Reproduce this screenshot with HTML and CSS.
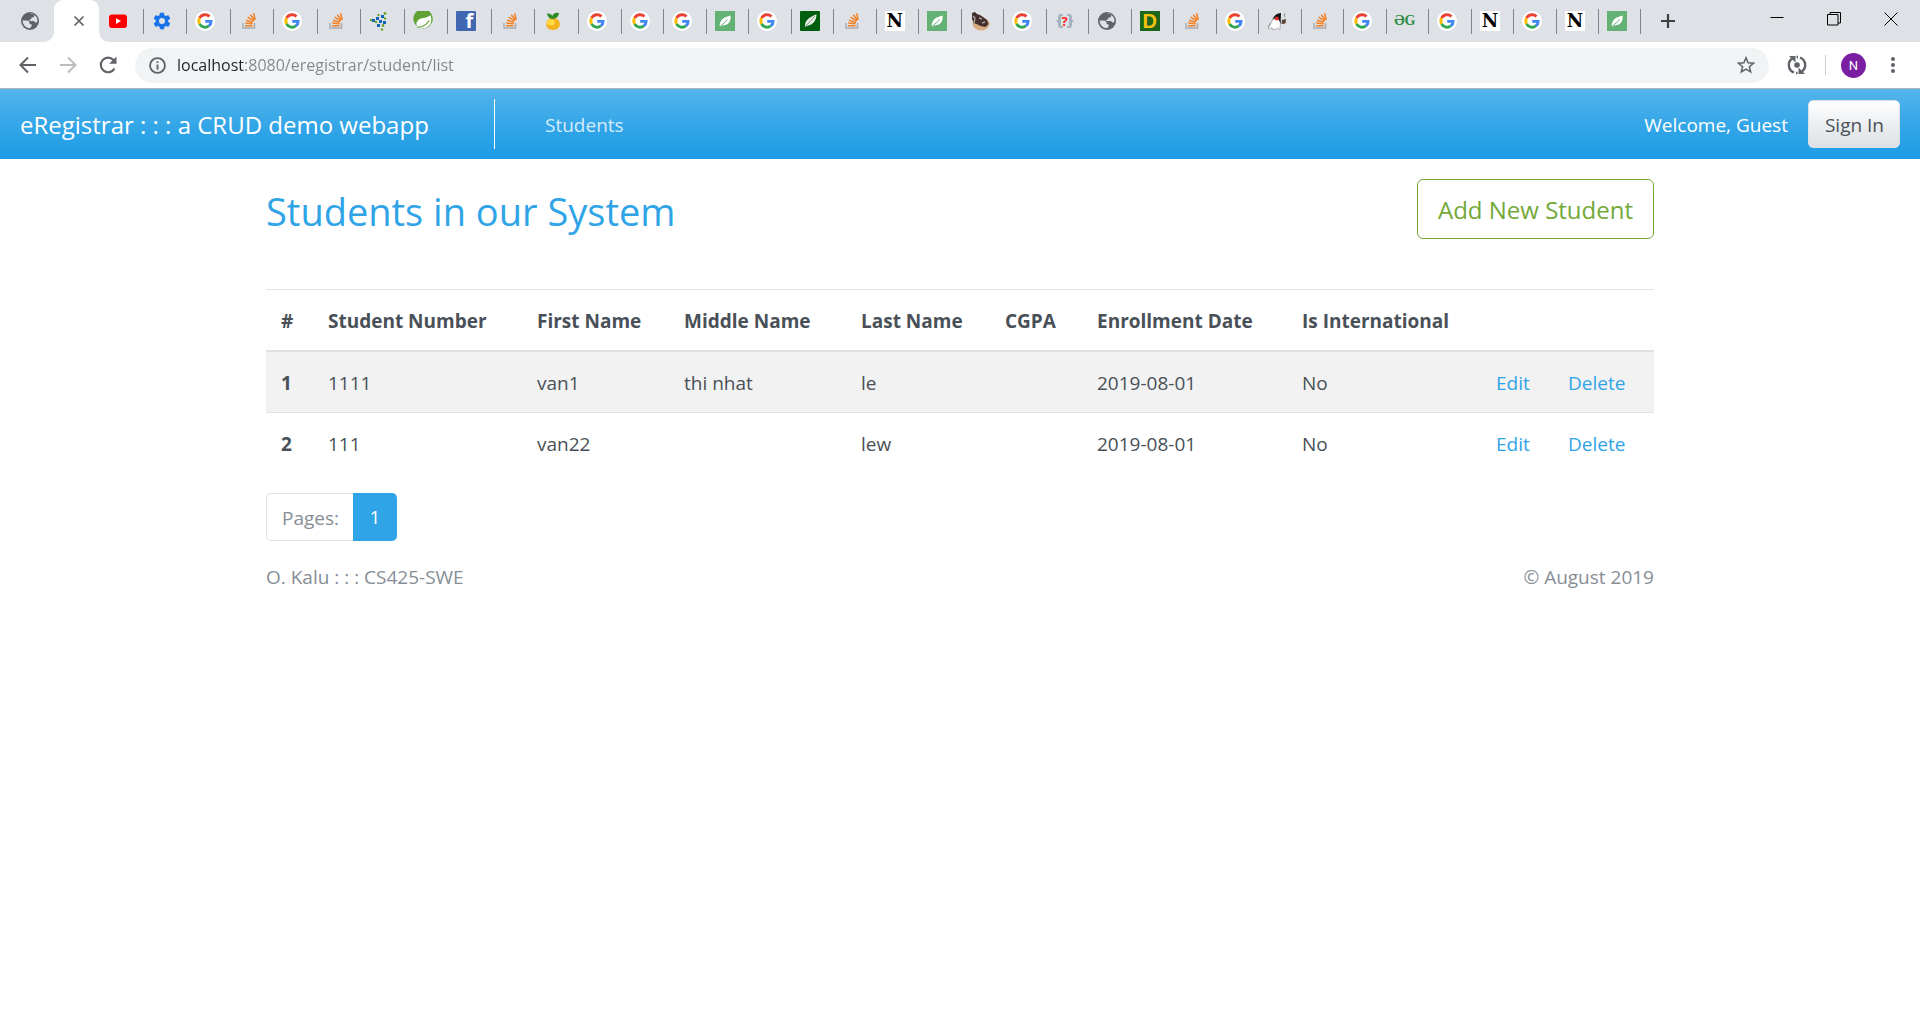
FILE: index.html
```html
<!DOCTYPE html>
<html lang="en">
<head>
<meta charset="utf-8">
<meta name="viewport" content="width=device-width, initial-scale=1">
<title>eRegistrar</title>
<link rel="stylesheet" href="styles.css">
</head>
<body>
<svg class="sprite" aria-hidden="true">
  <symbol id="globe" viewBox="0 0 20 20"><circle cx="10" cy="10" r="9" fill="#5f6368"/><path d="M2.6 9.5h4.2c1.800 0 2.800 1 2.800 2.600v1.200h2v1.400c-.2 1.400-1 2-2 2.600A7.400 7.400 0 0 1 2.600 9.500zM9.200 3c2-.5 3.700 0 5.200 1l-.6 2.200-2.300.3-.3 1.800-2 .4.400 1.300h4.200l1.600 1.500 1.700-.3c.5-1.700.3-3.400-.3-4.700l-2.400-2.500C12.800 2.400 10.800 2.200 9.200 3z" fill="#dee1e6"/></symbol>
  <symbol id="youtube" viewBox="0 0 20 20"><rect x="1" y="3.500" width="18" height="13.500" rx="3" fill="#f00"/><path d="M8 7.300v5.600l5-2.800z" fill="#fff"/></symbol>
  <symbol id="gear" viewBox="0 0 24 24"><path fill="#1a73e8" d="M19.400 13a7.500 7.500 0 0 0 0-2l2.200-1.700a.5.500 0 0 0 .1-.6l-2-3.500a.5.500 0 0 0-.6-.2l-2.600 1a7.700 7.700 0 0 0-1.700-1l-.4-2.600a.5.500 0 0 0-.5-.4h-4a.5.500 0 0 0-.5.400L9 5a7.700 7.700 0 0 0-1.700 1l-2.500-1a.5.500 0 0 0-.6.200l-2 3.500a.5.500 0 0 0 .1.600L4.500 11a7.500 7.500 0 0 0 0 2l-2.200 1.700a.5.500 0 0 0-.1.600l2 3.500c.1.200.4.300.6.200l2.600-1c.5.400 1.100.7 1.700 1l.4 2.600c0 .2.200.4.500.4h4c.3 0 .5-.2.500-.4l.4-2.600c.6-.3 1.200-.6 1.700-1l2.500 1c.2.100.5 0 .6-.2l2-3.500a.5.500 0 0 0-.1-.6zM12 15.600a3.600 3.600 0 1 1 0-7.200 3.600 3.600 0 0 1 0 7.200z"/></symbol>
  <symbol id="google" viewBox="0 0 20 20"><circle cx="10" cy="10" r="10" fill="#fff"/><g fill="none" stroke-width="2.900"><path d="M14.500 5.600A6.200 6.200 0 0 0 4.600 7" stroke="#ea4335"/><path d="M4.600 7a6.300 6.300 0 0 0 0 6" stroke="#fbbc05"/><path d="M4.600 13a6.200 6.200 0 0 0 9.300 1.800" stroke="#34a853"/><path d="M13.900 14.800c1.500-1.200 2.200-2.500 2.200-4.400H10.200" stroke="#4285f4"/></g></symbol>
  <symbol id="stack" viewBox="0 0 20 20"><path d="M4 12v5h11.500v-5" fill="none" stroke="#a9adb1" stroke-width="1.500"/><g stroke="#f48024" stroke-width="1.500"><path d="M6 14.700h7.500M6.200 12l7.400.8M7 9.200l7 2.200M8.700 6.200l6 4M11.300 3.700l4.200 5.600M14.600 2.200l1.600 6.500"/></g></symbol>
  <symbol id="dots" viewBox="0 0 20 20"><g fill="#1565b5"><path d="M7 6h3v3H7zM12 4h3v3h-3zM10 9h3v3h-3zM14 10h3v3h-3zM8 13h3v3H8zM3 8h3v3H3z"/></g><g fill="#6aa52c"><circle cx="16" cy="2.500" r="1.400"/><circle cx="9.500" cy="4" r="1.200"/><circle cx="7" cy="11" r="1.300"/><circle cx="2" cy="9" r="1.200"/><circle cx="14" cy="14.500" r="1.400"/><circle cx="16" cy="7.500" r="1.200"/><circle cx="13" cy="18.500" r="1.200"/></g></symbol>
  <symbol id="spring" viewBox="0 0 20 20"><path d="M17.500 1.500A9.700 9.700 0 1 0 19.800 8c-.2-2.500-1-4.700-2.300-6.500z" fill="#5fa134"/><path d="M17.500 4C14.500 7.500 9.500 6 6 8.500c-3.600 2.800-3 6.200-.5 8 3.500 1.500 8.500.8 11-2.200 2.500-3 2-7 1-10.300z" fill="#fff"/><path d="M4.500 16.300c5-.3 9-2.500 11.700-6.800" fill="none" stroke="#5fa134" stroke-width="1.200"/></symbol>
  <symbol id="fruit" viewBox="0 0 20 20"><path d="M10 7c4 0 6.800 2.300 6.800 6.300S13.500 19 10 19s-6.800-1.700-6.800-5.700S6 7 10 7z" fill="#f6b21b"/><ellipse cx="8" cy="11.500" rx="4" ry="3" fill="#ffdc46"/><path d="M10 8C6 8 4.500 5 4 2.500 7 2 8.500 3.500 9.500 5 10 2.500 12.500 1.300 16 2c-.3 3-2.300 5.700-6 6z" fill="#2c8b25"/></symbol>
  <symbol id="leaf" viewBox="0 0 20 20"><path d="M0 0h20v20H0z" fill="#63b175"/><path d="M15.500 4.500c.7 5.500-1.800 10-7.600 9.700L5.500 15.800l-.9-1C5 8.300 9 6.200 15.500 4.500z" fill="#fff"/><path d="M5 15.500c3-2.500 5.500-4.500 7.500-7" fill="none" stroke="#63b175"/></symbol>
  <symbol id="feather" viewBox="0 0 20 20"><rect width="20" height="20" rx="1" fill="#005f0f"/><path d="M16.500 3.500c0 5-2.700 9.500-7.500 10.800L4.800 16l.7-4.500C7.500 7.500 12 5 16.500 3.500z" fill="#e8f0e8"/><path d="M5 16L15 5" stroke="#7a977d"/></symbol>
  <symbol id="coffee" viewBox="0 0 20 20"><ellipse cx="11" cy="13" rx="8.500" ry="6.500" fill="#d9ab83"/><path d="M2 2l3-1 2 2 3 1 3 2 4 3 1.500 4-3 3-5-1-4-2-3-1L2 8z" fill="#43302c"/><path d="M3 5l2 2-1 5M9 7l3 1M12 12l3-1" fill="none" stroke="#a8a0a0" stroke-width="1.400"/></symbol>
  <symbol id="brackets" viewBox="0 0 20 20"><path d="M8 3H5.500Q3 3 3 6v2.500L1 10l2 1.500V14q0 3 2.500 3H8v-2H6V5h2zM12 3h2.500Q17 3 17 6v2.500l2 1.500-2 1.500V14q0 3-2.500 3H12v-2h2V5h-2z" fill="#a5b3c1"/></symbol>
  <symbol id="duke" viewBox="0 0 20 20"><path d="M6 8L1 17.500l2 .3 2-1.500.5 2.500 3-.5 2-1.500 2.500 2 .5-10z" fill="#fff" stroke="#888" stroke-width=".6"/><path d="M5.500 8.500C7 4.500 10 2.200 14 2l-.5 11-1.500-4-3-2.500z" fill="#111"/><circle cx="9.800" cy="7.500" r="2" fill="#dc2b2b"/><path d="M15 9l4-1-.5 4.500-4 .5z" fill="#5c4033"/><path d="M18 2q-1.500 2 0 4M3.500 12l-2 4" fill="none" stroke="#777" stroke-width=".8"/></symbol>
</svg>

<header class="browser">
  <div class="strip">
    <button class="tab tab-first" aria-label="Tab"><svg><use href="#globe"/></svg></button>
    <div class="tab-active">
      <button class="tab-close" aria-label="Close tab"><svg viewBox="0 0 12 12"><path d="M1.500 1.500l9 9M10.500 1.500l-9 9" stroke="#5f6368" stroke-width="1.700"/></svg></button>
    </div>
    <div class="tabs tabs-near">
      <button class="tab" aria-label="Tab"><svg><use href="#youtube"/></svg></button>
      <button class="tab" aria-label="Tab"><svg><use href="#gear"/></svg></button>
      <button class="tab" aria-label="Tab"><svg><use href="#google"/></svg></button>
      <button class="tab" aria-label="Tab"><svg><use href="#stack"/></svg></button>
      <button class="tab" aria-label="Tab"><svg><use href="#google"/></svg></button>
      <button class="tab" aria-label="Tab"><svg><use href="#stack"/></svg></button>
      <button class="tab" aria-label="Tab"><svg><use href="#dots"/></svg></button>
      <button class="tab" aria-label="Tab"><svg><use href="#spring"/></svg></button>
      <button class="tab" aria-label="Tab"><span class="fav fav-f">f</span></button>
      <button class="tab" aria-label="Tab"><svg><use href="#stack"/></svg></button>
      <button class="tab" aria-label="Tab"><svg><use href="#fruit"/></svg></button>
    </div>
    <div class="tabs tabs-far">
      <button class="tab" aria-label="Tab"><svg><use href="#google"/></svg></button>
      <button class="tab" aria-label="Tab"><svg><use href="#google"/></svg></button>
      <button class="tab" aria-label="Tab"><svg><use href="#google"/></svg></button>
      <button class="tab" aria-label="Tab"><svg><use href="#leaf"/></svg></button>
      <button class="tab" aria-label="Tab"><svg><use href="#google"/></svg></button>
      <button class="tab" aria-label="Tab"><svg><use href="#feather"/></svg></button>
      <button class="tab" aria-label="Tab"><svg><use href="#stack"/></svg></button>
      <button class="tab" aria-label="Tab"><span class="fav fav-n">N</span></button>
      <button class="tab" aria-label="Tab"><svg><use href="#leaf"/></svg></button>
      <button class="tab" aria-label="Tab"><svg><use href="#coffee"/></svg></button>
      <button class="tab" aria-label="Tab"><svg><use href="#google"/></svg></button>
      <button class="tab tab-query" aria-label="Tab"><svg><use href="#brackets"/></svg><span class="query">?</span></button>
      <button class="tab" aria-label="Tab"><svg><use href="#globe"/></svg></button>
      <button class="tab" aria-label="Tab"><span class="fav fav-d">D</span></button>
      <button class="tab" aria-label="Tab"><svg><use href="#stack"/></svg></button>
      <button class="tab" aria-label="Tab"><svg><use href="#google"/></svg></button>
      <button class="tab" aria-label="Tab"><svg><use href="#duke"/></svg></button>
      <button class="tab" aria-label="Tab"><svg><use href="#stack"/></svg></button>
      <button class="tab" aria-label="Tab"><svg><use href="#google"/></svg></button>
      <button class="tab" aria-label="Tab"><span class="fav fav-gg">ƏG</span></button>
      <button class="tab" aria-label="Tab"><svg><use href="#google"/></svg></button>
      <button class="tab" aria-label="Tab"><span class="fav fav-n">N</span></button>
      <button class="tab" aria-label="Tab"><svg><use href="#google"/></svg></button>
      <button class="tab" aria-label="Tab"><span class="fav fav-n">N</span></button>
      <button class="tab" aria-label="Tab"><svg><use href="#leaf"/></svg></button>
    </div>
    <button class="new-tab" aria-label="New tab"><svg viewBox="0 0 16 16"><path d="M8 1v14M1 8h14" stroke="#3c4043" stroke-width="2.200"/></svg></button>
    <div class="window-controls">
      <button aria-label="Minimize"><svg viewBox="0 0 14 14"><path d="M.5 5.500h13" stroke="#000"/></svg></button>
      <button aria-label="Restore"><svg viewBox="0 0 14 14"><path d="M.5 2.500h10.500v10.500H.5zM3 2.500V.5h10.500v10.500H11" fill="none" stroke="#000"/></svg></button>
      <button aria-label="Close"><svg viewBox="0 0 14 14"><path d="M.5.5l13 13M13.500.5l-13 13" stroke="#000"/></svg></button>
    </div>
  </div>
  <div class="toolbar">
    <button class="tool" aria-label="Back"><svg viewBox="0 0 20 20"><path d="M18 10H3M10 2.500L2.500 10l7.500 7.500" fill="none" stroke="#5f6368" stroke-width="2"/></svg></button>
    <button class="tool" aria-label="Forward"><svg viewBox="0 0 20 20"><path d="M2 10h15M10 2.500l7.500 7.500-7.500 7.500" fill="none" stroke="#babcbe" stroke-width="2"/></svg></button>
    <button class="tool" aria-label="Reload"><svg viewBox="0 0 20 20"><path d="M16.500 13.500A7.300 7.300 0 1 1 15.500 5l1.500 2" fill="none" stroke="#5f6368" stroke-width="2.200"/><path d="M18.500 1.500v7.300h-7.300z" fill="#5f6368"/></svg></button>
    <div class="address">
      <svg class="info" viewBox="0 0 16 16"><circle cx="8" cy="8" r="7" fill="none" stroke="#5f6368" stroke-width="1.700"/><path d="M8 7v5M8 4v1.700" stroke="#5f6368" stroke-width="1.700"/></svg>
      <input class="url" type="text" aria-label="Address" value="localhost:8080/eregistrar/student/list">
      <button class="star" aria-label="Bookmark"><svg viewBox="0 0 18 18"><path d="M9 1.800l2.100 5 5.400.4-4.100 3.500 1.300 5.300L9 13.200 4.300 16l1.300-5.300-4.100-3.500 5.400-.4z" fill="none" stroke="#5f6368" stroke-width="1.500"/></svg></button>
    </div>
    <button class="sync" aria-label="Sync"><svg viewBox="0 0 20 20"><g fill="none" stroke="#5f6368" stroke-width="2.400"><path d="M7 17.500A8 8 0 0 1 5.500 3.300M13 2.500A8 8 0 0 1 14.500 16.700M9.500 2h1.500M9 18h1.500"/></g><path d="M2 1h6.500v6.500zM18 19h-6.500v-6.500z" fill="#5f6368"/><circle cx="10" cy="10" r="2.800" fill="#5f6368"/></svg></button>
    <span class="rule"></span>
    <button class="avatar" aria-label="Profile">N</button>
    <button class="menu" aria-label="Menu"><svg viewBox="0 0 4 18"><circle cx="2" cy="3" r="2" fill="#5f6368"/><circle cx="2" cy="9" r="2" fill="#5f6368"/><circle cx="2" cy="15" r="2" fill="#5f6368"/></svg></button>
  </div>
</header>

<nav class="navbar">
  <a class="brand" href="#">eRegistrar : : : a CRUD demo webapp</a>
  <a class="nav-link" href="#">Students</a>
  <span class="welcome">Welcome, Guest</span>
  <button class="sign-in">Sign In</button>
</nav>

<main class="container">
  <div class="heading">
    <h1>Students in our System</h1>
    <a class="add" href="#">Add New Student</a>
  </div>
  <table class="students">
    <colgroup><col class="c-index"><col class="c-number"><col class="c-first"><col class="c-middle"><col class="c-last"><col class="c-cgpa"><col class="c-date"><col class="c-intl"><col class="c-edit"><col class="c-delete"></colgroup>
    <thead>
      <tr><th scope="col">#</th><th scope="col">Student Number</th><th scope="col">First Name</th><th scope="col">Middle Name</th><th scope="col">Last Name</th><th scope="col">CGPA</th><th scope="col">Enrollment Date</th><th scope="col">Is International</th><th></th><th></th></tr>
    </thead>
    <tbody>
      <tr><th scope="row">1</th><td>1111</td><td>van1</td><td>thi nhat</td><td>le</td><td></td><td>2019-08-01</td><td>No</td><td><a href="#">Edit</a></td><td><a href="#">Delete</a></td></tr>
      <tr><th scope="row">2</th><td>111</td><td>van22</td><td></td><td>lew</td><td></td><td>2019-08-01</td><td>No</td><td><a href="#">Edit</a></td><td><a href="#">Delete</a></td></tr>
    </tbody>
  </table>
  <div class="pagination">
    <span class="pages">Pages:</span>
    <a class="page" href="#">1</a>
  </div>
  <footer class="footer">
    <span>O. Kalu : : : CS425-SWE</span>
    <span>© August 2019</span>
  </footer>
</main>
</body>
</html>
```
FILE: styles.css
```css
* { box-sizing: border-box; }

body {
  margin: 0;
  background: #fff;
  color: #495057;
  font: 19px/30px "Open Sans", "Noto Sans", sans-serif;
}

button {
  margin: 0;
  padding: 0;
  border: 0;
  background: none;
  font: inherit;
  color: inherit;
}

a { color: #2fa4e7; text-decoration: none; }
svg { display: block; }
.sprite { display: none; }

/* Browser window */
.browser { border-bottom: 1px solid #b0b4b8; }
.strip {
  display: flex;
  height: 42px;
  background: #dee1e6;
}
.tab {
  display: flex;
  align-items: center;
  height: 25px;
  padding-left: 8px;
  border-left: 1px solid #808387;
}
.tab svg { width: 20px; height: 20px; flex: none; }
.tab-first {
  width: 54px;
  height: 42px;
  padding-left: 20px;
  border: 0;
}
.tab-active {
  position: relative;
  display: flex;
  align-items: center;
  justify-content: flex-end;
  width: 45px;
  padding-right: 14px;
  background: #fff;
  border-radius: 9px 9px 0 0;
}
.tab-active::before,
.tab-active::after {
  content: "";
  position: absolute;
  bottom: 0;
  width: 9px;
  height: 9px;
}
.tab-active::before {
  right: 100%;
  background: radial-gradient(circle at 0 0, #dee1e6 8px, #fff 9px);
}
.tab-active::after {
  left: 100%;
  background: radial-gradient(circle at 100% 0, #dee1e6 8px, #fff 9px);
}
.tab-close svg { width: 12px; height: 12px; }
.tabs {
  display: grid;
  grid-auto-flow: column;
  grid-auto-columns: 1fr;
  align-items: center;
}
.tabs-near { flex: 0 1 479px; }
.tabs-near .tab:first-child { border-color: transparent; }
.tabs-far { flex: 0 1 1063px; }
.tabs-far .tab:last-child { border-right: 1px solid #808387; }

.fav {
  width: 20px;
  height: 20px;
  line-height: 20px;
  text-align: center;
  font-weight: 700;
}
.fav-f {
  padding-left: 6px;
  background: #4267b2;
  border-radius: 1px;
  color: #fff;
  font-size: 20px;
}
.fav-n {
  background: #fff;
  color: #000;
  font-family: "DejaVu Serif", serif;
  font-size: 18px;
}
.fav-d {
  background: #1b661b;
  color: #f4c20d;
  font-family: "Liberation Sans", sans-serif;
  font-size: 20px;
}
.fav-gg {
  display: flex;
  justify-content: center;
  color: #2f8d46;
  font-family: "Liberation Serif", serif;
  font-size: 14px;
}
.tab-query { position: relative; }
.query {
  position: absolute;
  left: 8px;
  width: 20px;
  color: #f22;
  font-size: 13px;
  font-weight: 700;
  line-height: 20px;
  text-align: center;
}
.new-tab { margin-left: 19px; }
.new-tab svg { width: 16px; height: 16px; }
.window-controls {
  display: flex;
  align-items: flex-start;
  gap: 43px;
  margin-left: auto;
  padding: 12px 22px 0 0;
}
.window-controls svg { width: 14px; height: 14px; }

.toolbar {
  display: flex;
  align-items: center;
  height: 46px;
  padding: 0 25px 0 18px;
}
.tool { margin-right: 20px; }
.tool svg { width: 20px; height: 20px; }
.address {
  display: flex;
  flex: 1;
  align-items: center;
  height: 35px;
  margin-left: -3px;
  padding: 0 14px;
  background: #f1f3f4;
  border-radius: 18px;
}
.info { width: 17px; height: 17px; }
.url {
  flex: 1;
  min-width: 0;
  margin-left: 11px;
  padding: 0;
  border: 0;
  outline: 0;
  background: linear-gradient(90deg, #202124 68px, #80868b 68px);
  -webkit-background-clip: text;
  background-clip: text;
  color: #80868b;
  -webkit-text-fill-color: transparent;
  font: inherit;
  font-size: 16px;
}
.star svg { width: 18px; height: 18px; }
.sync { margin-left: 18px; }
.sync svg { width: 20px; height: 20px; }
.rule {
  width: 1px;
  height: 20px;
  margin: 0 15px 0 18px;
  background: #ccced1;
}
.avatar {
  width: 25px;
  height: 25px;
  border-radius: 50%;
  background: #7b1fa2;
  color: #fff;
  font: 13px/25px Roboto, sans-serif;
}
.menu { margin-left: 25px; }
.menu svg { width: 4px; height: 18px; }

/* Site navigation */
.navbar {
  display: flex;
  align-items: center;
  height: 70px;
  padding: 0 20px;
  background: linear-gradient(#54b4eb, #2fa4e7 60%, #1d9ce5);
  color: #fff;
}
.brand {
  width: 475px;
  padding-top: 2px;
  border-right: 1px solid #fff;
  color: #fff;
  font-size: 24px;
  line-height: 48px;
  white-space: nowrap;
}
.nav-link {
  margin-left: 50px;
  padding-top: 2px;
  color: rgba(255, 255, 255, 0.8);
}
.welcome {
  margin-left: auto;
  padding-top: 2px;
}
.sign-in {
  height: 48px;
  margin-left: 20px;
  padding: 2px 15px 0 16px;
  border: 1px solid #dde1e5;
  border-radius: 5px;
  background: linear-gradient(#fff, #e9ecef 60%, #dde1e5);
  color: #495057;
}

/* Student list */
.container {
  width: 100%;
  max-width: 1428px;
  margin: 0 auto;
  padding: 20px;
}
.heading {
  display: flex;
  align-items: flex-start;
  justify-content: space-between;
  margin-bottom: 50px;
}
h1 {
  margin: 0;
  padding-top: 8px;
  color: #2fa4e7;
  font-size: 38px;
  font-weight: 400;
  line-height: 48px;
}
.add {
  padding: 2px 20px 0;
  border: 1px solid #73a839;
  border-radius: 6px;
  color: #73a839;
  font-size: 24px;
  line-height: 56px;
}
.students {
  width: 100%;
  margin-bottom: 20px;
  table-layout: fixed;
  border-collapse: collapse;
}
.students th,
.students td {
  padding: 16px 15px 14px;
  border-top: 1px solid #dee2e6;
  text-align: left;
  white-space: nowrap;
}
.students thead th { border-bottom: 2px solid #dee2e6; }
.students th { font-weight: 700; }
.students tbody tr:nth-child(odd) { background: #f2f2f2; }
.c-index { width: 47px; }
.c-number { width: 209px; }
.c-first { width: 147px; }
.c-middle { width: 177px; }
.c-last { width: 144px; }
.c-cgpa { width: 92px; }
.c-date { width: 205px; }
.c-intl { width: 194px; }
.c-edit { width: 72px; }
.c-delete { width: 101px; }

.pagination { display: flex; line-height: 48px; }
.pages {
  height: 48px;
  padding: 0 14px 0 15px;
  border: 1px solid #dee2e6;
  border-right: 0;
  border-radius: 5px 0 0 5px;
  color: #868e96;
}
.page {
  width: 44px;
  border-radius: 0 5px 5px 0;
  background: #2fa4e7;
  color: #fff;
  text-align: center;
}
.footer {
  display: flex;
  justify-content: space-between;
  margin-top: 21px;
  color: #868e96;
}
```
